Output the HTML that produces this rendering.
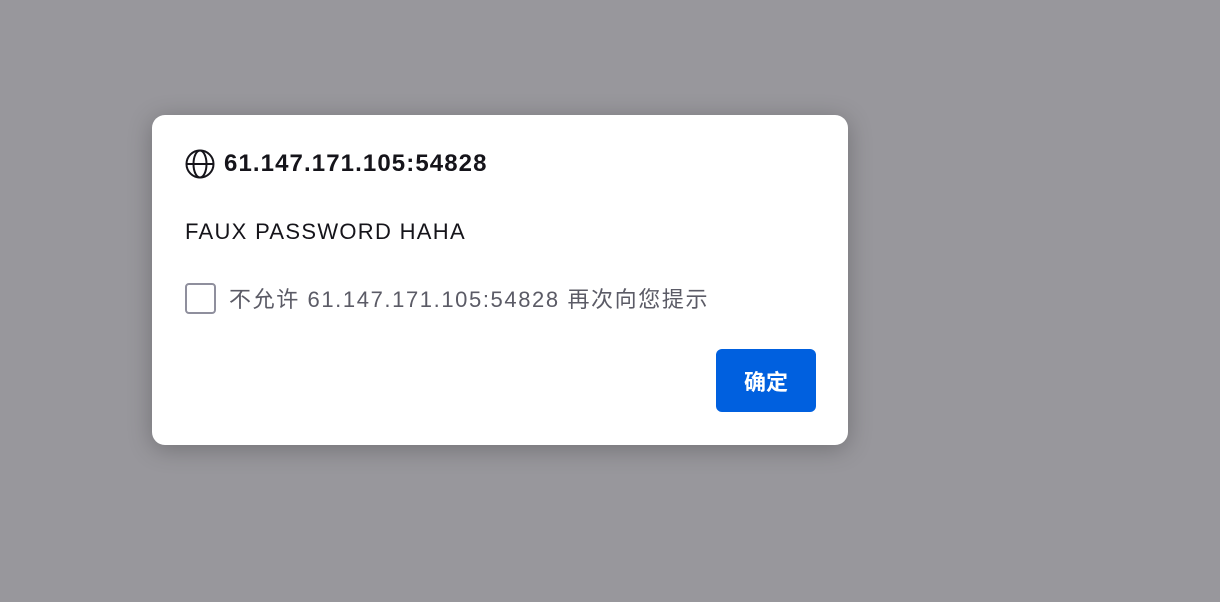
<!DOCTYPE html>
<html><head><meta charset="utf-8"><style>
html,body{margin:0;width:1220px;height:602px;background:#98979c;overflow:hidden;font-family:"Liberation Sans","Noto Sans CJK SC",sans-serif}
.d{position:absolute;left:152px;top:115px;width:696px;height:330px;background:#fff;border-radius:13px;box-shadow:0 4px 24px rgba(0,0,0,.25)}
.t{position:absolute;left:33px;top:32px;font-size:24px;font-weight:bold;color:#15141a;display:flex;align-items:center;height:34px;letter-spacing:1.1px}
.t svg{margin-right:9px}
.m{position:absolute;left:33px;top:104px;font-size:22px;color:#15141a;letter-spacing:1.3px}
.c{position:absolute;left:33px;top:168px;width:27px;height:27px;border:2px solid #8f8f9d;border-radius:4px}
.cl{position:absolute;left:77px;top:167px;font-size:22px;color:#5b5b66;letter-spacing:1.6px}
.b{position:absolute;left:564px;top:234px;width:100px;height:63px;background:#0060df;border-radius:6px;color:#fff;font-weight:bold;font-size:22px;display:flex;align-items:center;justify-content:center}
</style></head><body>
<div class="d">
<div class="t"><svg width="30" height="30" viewBox="0 0 30 30" fill="none" stroke="#15141a" stroke-width="2"><circle cx="15" cy="15" r="13.5"/><path d="M1.5 15h27"/><ellipse cx="15" cy="15" rx="6.5" ry="13.5"/></svg>61.147.171.105:54828</div>
<div class="m">FAUX PASSWORD HAHA</div>
<div class="c"></div>
<div class="cl">不允许 61.147.171.105:54828 再次向您提示</div>
<div class="b">确定</div>
</div>
</body></html>
